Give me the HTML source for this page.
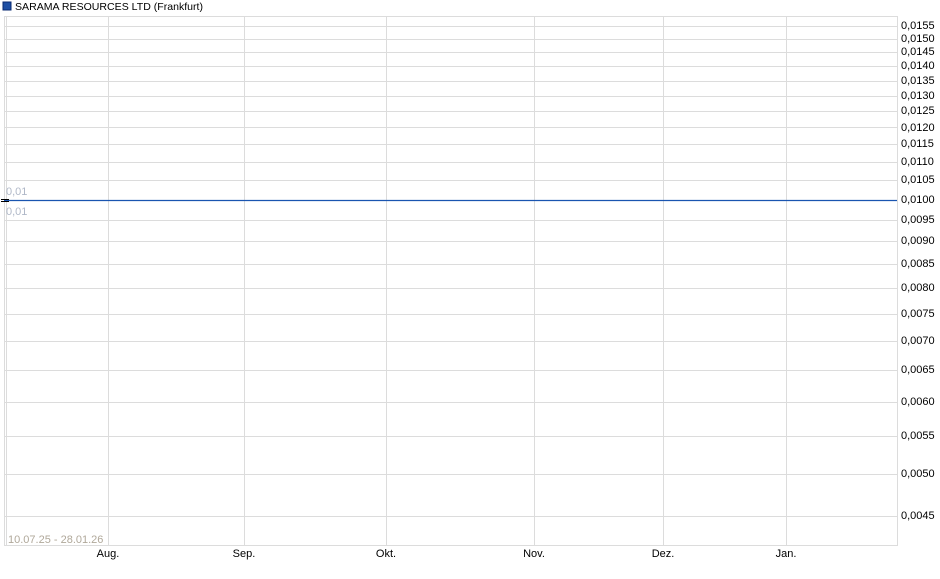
<!DOCTYPE html>
<html><head><meta charset="utf-8"><style>
html,body{margin:0;padding:0;background:#fff;width:940px;height:579px;overflow:hidden}
svg text{font-family:"Liberation Sans",Arial,sans-serif}
</style></head><body>
<svg width="940" height="579" xmlns="http://www.w3.org/2000/svg">
<rect x="3" y="2" width="8" height="8" fill="#1f4fa3" stroke="#0a2a70" stroke-width="1"/>
<text x="15" y="10" font-size="10.5" fill="#000" textLength="188" lengthAdjust="spacingAndGlyphs">SARAMA RESOURCES LTD (Frankfurt)</text>
<g stroke="#dcdcdc" stroke-width="1">
<line x1="4" y1="16.5" x2="898" y2="16.5"/>
<line x1="4" y1="545.5" x2="898" y2="545.5"/>
<line x1="4.5" y1="16" x2="4.5" y2="546"/>
<line x1="6.5" y1="16" x2="6.5" y2="546"/>
<line x1="897.5" y1="16" x2="897.5" y2="546"/>
<line x1="108.5" y1="16" x2="108.5" y2="546"/>
<line x1="244.5" y1="16" x2="244.5" y2="546"/>
<line x1="386.5" y1="16" x2="386.5" y2="546"/>
<line x1="534.5" y1="16" x2="534.5" y2="546"/>
<line x1="663.5" y1="16" x2="663.5" y2="546"/>
<line x1="786.5" y1="16" x2="786.5" y2="546"/>
<g>
<line x1="4" x2="898" y1="26.5" y2="26.5"/><line x1="4" x2="898" y1="39.5" y2="39.5"/>
<line x1="4" x2="898" y1="52.5" y2="52.5"/><line x1="4" x2="898" y1="66.5" y2="66.5"/>
<line x1="4" x2="898" y1="81.5" y2="81.5"/><line x1="4" x2="898" y1="96.5" y2="96.5"/>
<line x1="4" x2="898" y1="111.5" y2="111.5"/><line x1="4" x2="898" y1="127.5" y2="127.5"/>
<line x1="4" x2="898" y1="144.5" y2="144.5"/><line x1="4" x2="898" y1="162.5" y2="162.5"/>
<line x1="4" x2="898" y1="180.5" y2="180.5"/><line x1="4" x2="898" y1="220.5" y2="220.5"/>
<line x1="4" x2="898" y1="241.5" y2="241.5"/><line x1="4" x2="898" y1="264.5" y2="264.5"/>
<line x1="4" x2="898" y1="288.5" y2="288.5"/><line x1="4" x2="898" y1="314.5" y2="314.5"/>
<line x1="4" x2="898" y1="341.5" y2="341.5"/><line x1="4" x2="898" y1="370.5" y2="370.5"/>
<line x1="4" x2="898" y1="402.5" y2="402.5"/><line x1="4" x2="898" y1="436.5" y2="436.5"/>
<line x1="4" x2="898" y1="474.5" y2="474.5"/><line x1="4" x2="898" y1="516.5" y2="516.5"/>
</g></g>
<line x1="4" y1="200.5" x2="897" y2="200.5" stroke="#1a55b0" stroke-width="1.2"/>
<line x1="1" y1="199.5" x2="9" y2="199.5" stroke="#000" stroke-width="1"/>
<line x1="1" y1="201.5" x2="9" y2="201.5" stroke="#000" stroke-width="1"/>
<text x="6" y="195" font-size="11" fill="#b0b8c8">0,01</text>
<text x="6" y="215" font-size="11" fill="#b0b8c8">0,01</text>
<text x="8" y="543" font-size="11" fill="#b0a89a">10.07.25 - 28.01.26</text>
<g font-size="11" fill="#000">
<text x="901" y="29">0,0155</text><text x="901" y="42">0,0150</text>
<text x="901" y="55">0,0145</text><text x="901" y="69">0,0140</text>
<text x="901" y="84">0,0135</text><text x="901" y="99">0,0130</text>
<text x="901" y="114">0,0125</text><text x="901" y="131">0,0120</text>
<text x="901" y="147">0,0115</text><text x="901" y="165">0,0110</text>
<text x="901" y="183">0,0105</text><text x="901" y="203">0,0100</text>
<text x="901" y="223">0,0095</text><text x="901" y="244">0,0090</text>
<text x="901" y="267">0,0085</text><text x="901" y="291">0,0080</text>
<text x="901" y="317">0,0075</text><text x="901" y="344">0,0070</text>
<text x="901" y="373">0,0065</text><text x="901" y="405">0,0060</text>
<text x="901" y="439">0,0055</text><text x="901" y="477">0,0050</text>
<text x="901" y="519">0,0045</text>
</g>
<g font-size="11" fill="#000" text-anchor="middle">
<text x="108" y="557">Aug.</text><text x="244" y="557">Sep.</text>
<text x="386" y="557">Okt.</text><text x="534" y="557">Nov.</text>
<text x="663" y="557">Dez.</text><text x="786" y="557">Jan.</text>
</g>
</svg>
</body></html>
